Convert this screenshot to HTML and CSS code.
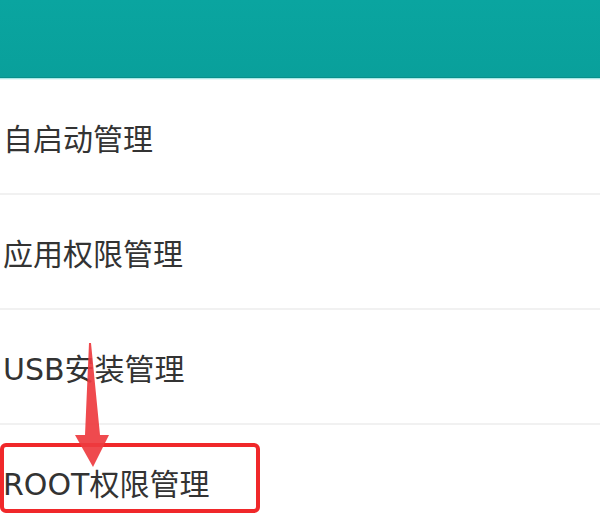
FILE: index.html
```html
<!DOCTYPE html>
<html lang="zh-CN">
<head>
<meta charset="utf-8">
<title>权限管理</title>
<link rel="stylesheet" href="styles.css">
</head>
<body>
<div class="page">
  <header class="topbar"></header>
  <ul class="menu">
    <li class="item">自启动管理</li>
    <li class="item">应用权限管理</li>
    <li class="item">USB安装管理</li>
    <li class="item">ROOT权限管理</li>
  </ul>
  <div class="highlight"></div>
  <svg class="arrow" width="40" height="130" viewBox="0 0 40 130">
    <path d="M15 0 L17 0 L26 92 L35 92 L19 124 L1 92 L11 92 Z" fill="#ee3b3f" fill-opacity="0.92"/>
  </svg>
</div>
</body>
</html>
```
FILE: styles.css
```css
html, body {
  margin: 0;
  padding: 0;
  background: #ffffff;
}
.page {
  position: relative;
  width: 600px;
  height: 520px;
  overflow: hidden;
  font-family: "DejaVu Sans", "Noto Sans CJK SC", sans-serif;
}
.topbar {
  height: 77px;
  background: linear-gradient(#0aa5a0, #09a09b);
  border-bottom: 1px solid #07908b;
  box-shadow: 0 1px 0 #a9e8e6, 0 2px 0 #e6f8f7;
}
.menu {
  list-style: none;
  margin: 0;
  padding: 0;
  padding-top: 2px;
}
.item {
  height: 113px;
  display: flex;
  align-items: center;
  padding-left: 3px;
  font-size: 30px;
  font-weight: 400;
  color: #333333;
  border-bottom: 2px solid #f1f1f1;
}
.highlight {
  position: absolute;
  left: 0;
  top: 443px;
  width: 252px;
  height: 62px;
  border: 4px solid #f0282a;
  border-radius: 6px;
}
.arrow {
  position: absolute;
  left: 74px;
  top: 343px;
}
```
